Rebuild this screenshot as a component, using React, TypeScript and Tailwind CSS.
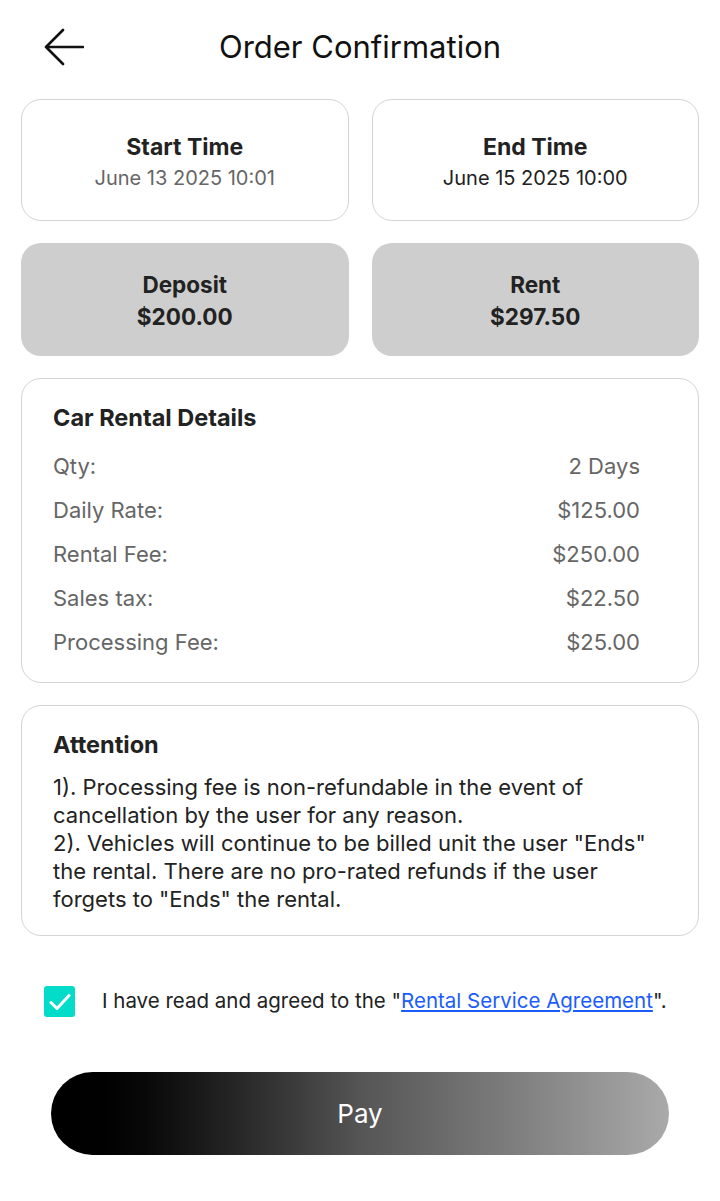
import React from 'react';

// --- Components ---

const BackArrow: React.FC = () => (
  <svg width="40" height="38" viewBox="0 0 40 38" fill="none">
    <path d="M39 19H2M19 2L2 19l17 17" stroke="#111" strokeWidth="2.6" strokeLinecap="round" strokeLinejoin="round" />
  </svg>
);

const TimeCard: React.FC<{ label: string; value: string; dim?: boolean }> = ({ label, value, dim }) => (
  <div className="flex-1 h-[122px] pt-[5px] rounded-[20px] border border-[#d4d4d4] bg-white flex flex-col items-center justify-center">
    <span className="text-[23px] font-bold text-[#222] leading-[31px]">{label}</span>
    <span className={`text-[20px] leading-[31px] ${dim ? 'text-[#666]' : 'text-[#222]'}`}>{value}</span>
  </div>
);

const AmountCard: React.FC<{ label: string; value: string }> = ({ label, value }) => (
  <div className="flex-1 h-[113px] pt-[3px] rounded-[20px] bg-[#cecece] flex flex-col items-center justify-center">
    <span className="text-[22.5px] font-bold text-[#222] leading-[32px]">{label}</span>
    <span className="text-[22.5px] font-bold text-[#222] leading-[32px]">{value}</span>
  </div>
);

const rows = [
  ['Qty:', '2 Days'],
  ['Daily Rate:', '$125.00'],
  ['Rental Fee:', '$250.00'],
  ['Sales tax:', '$22.50'],
  ['Processing Fee:', '$25.00'],
];

export default function App() {
  return (
    <div className="w-full min-h-screen bg-white font-['Inter',sans-serif] px-[21px]">
      {/* Header */}
      <div className="relative h-[99px] flex items-center justify-center">
        <div className="absolute left-[23px] top-[28px]">
          <BackArrow />
        </div>
        <h1 className="text-[31px] text-[#111] pb-[4px]">Order Confirmation</h1>
      </div>

      <div className="flex flex-col gap-[22px]">
        <div className="flex gap-[23px]">
          <TimeCard label="Start Time" value="June 13 2025 10:01" dim />
          <TimeCard label="End Time" value="June 15 2025 10:00" />
        </div>

        <div className="flex gap-[23px]">
          <AmountCard label="Deposit" value="$200.00" />
          <AmountCard label="Rent" value="$297.50" />
        </div>

        {/* Details */}
        <div className="rounded-[20px] border border-[#d4d4d4] pt-[24px] pb-[18px] pl-[31px] pr-[58px]">
          <h2 className="text-[23.5px] font-bold text-[#222] leading-[29px] mb-[12px]">Car Rental Details</h2>
          {rows.map(([k, v]) => (
            <div key={k} className="h-[44px] flex items-center justify-between text-[22px] text-[#666]">
              <span>{k}</span>
              <span>{v}</span>
            </div>
          ))}
        </div>

        {/* Attention */}
        <div className="rounded-[20px] border border-[#d4d4d4] pt-[24px] pb-[22px] px-[31px]">
          <h2 className="text-[23.5px] font-bold text-[#222] leading-[29px] mb-[14px]">Attention</h2>
          <p className="text-[22px] text-[#222] leading-[28px]">
            1). Processing fee is non-refundable in the event of<br />
            cancellation by the user for any reason.<br />
            2). Vehicles will continue to be billed unit the user "Ends"<br />
            the rental. There are no pro-rated refunds if the user<br />
            forgets to "Ends" the rental.
          </p>
        </div>
      </div>

      {/* Agreement */}
      <div className="flex items-center mt-[50px] pl-[23px]">
        <div className="w-[31px] h-[31px] rounded-[3px] bg-[#02dcc8] flex items-center justify-center shrink-0">
          <svg width="22" height="18" viewBox="0 0 22 18" fill="none">
            <path d="M2 9.5l6 6L20 2.5" stroke="white" strokeWidth="3" strokeLinecap="round" strokeLinejoin="round" />
          </svg>
        </div>
        <span className="ml-[27px] text-[20.5px] text-[#222] whitespace-nowrap">
          I have read and agreed to the "<a className="text-[#1a5cff] underline underline-offset-2">Rental Service Agreement</a>".
        </span>
      </div>

      {/* Pay */}
      <div className="px-[30px] mt-[55px] pb-[44px]">
        <button className="w-full h-[83px] rounded-full bg-gradient-to-r from-black via-[#555] to-[#aaa] text-white text-[26px]">
          Pay
        </button>
      </div>
    </div>
  );
}
